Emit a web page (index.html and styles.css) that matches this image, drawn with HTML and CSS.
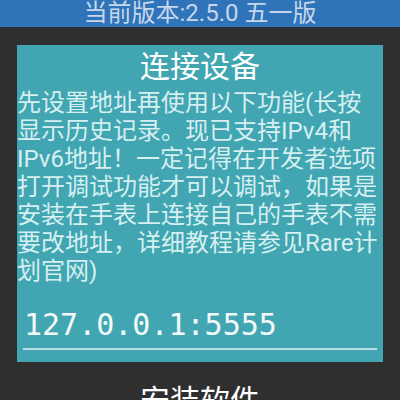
FILE: index.html
```html
<!DOCTYPE html>
<html lang="zh-CN">
<head>
<meta charset="utf-8">
<link rel="stylesheet" href="styles.css">
</head>
<body>
<div class="header">当前版本:2.5.0 五一版</div>
<main class="content">
  <section class="card">
    <h1 class="card-title">连接设备</h1>
    <p class="card-text">先设置地址再使用以下功能(长按显示历史记录。现已支持IPv4和IPv6地址！一定记得在开发者选项打开调试功能才可以调试，如果是安装在手表上连接自己的手表不需要改地址，详细教程请参见Rare计划官网)</p>
    <div class="field">
      <div class="field-value">127.0.0.1:5555</div>
      <div class="field-line"></div>
    </div>
  </section>
  <h2 class="section-title">安装软件</h2>
</main>
</body>
</html>
```
FILE: styles.css
```css
html, body {
  margin: 0;
  padding: 0;
}
body {
  width: 400px;
  height: 400px;
  overflow: hidden;
  background: #2f2f2f;
  font-family: Roboto, "Noto Sans CJK SC", sans-serif;
}
.header {
  height: 27px;
  background: #2f73b9;
  color: #c6d7ec;
  font-size: 24px;
  line-height: 27px;
  text-align: center;
  white-space: nowrap;
}
.content {
  padding: 18px 17px 0;
}
.card {
  background: #41a6b2;
  padding-bottom: 12px;
}
.card-title {
  margin: 0;
  font-weight: normal;
  color: #ffffff;
  font-size: 30px;
  line-height: 44px;
  text-align: center;
}
.card-text {
  margin: 0;
  color: #d6eff1;
  font-size: 24px;
  line-height: 28px;
}
.field {
  margin-top: 22px;
  padding: 0 6px;
}
.field-value {
  padding-left: 1px;
  color: #f4fafa;
  font-family: "DejaVu Sans Mono", monospace;
  font-size: 30px;
  line-height: 36px;
}
.field-line {
  height: 2px;
  margin-top: 5px;
  background: #b7dfe3;
}
.section-title {
  margin: 19px 0 0;
  font-weight: normal;
  color: #ffffff;
  font-size: 30px;
  line-height: 40px;
  text-align: center;
}
```
